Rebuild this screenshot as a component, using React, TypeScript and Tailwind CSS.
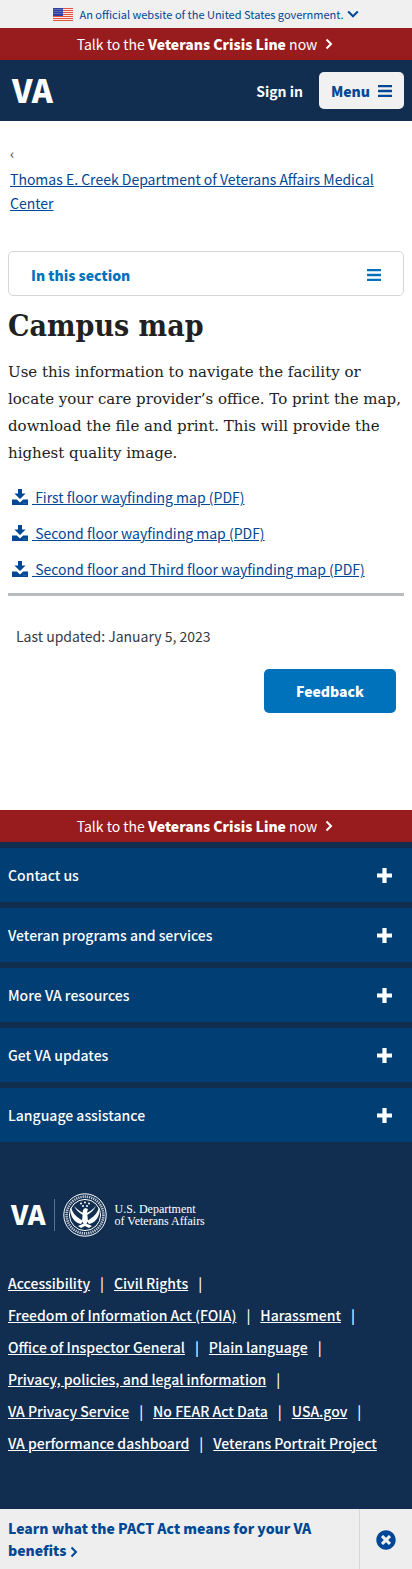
import React from "react";
import { FaTimesCircle } from "react-icons/fa";

const footerSections = [
  "Contact us",
  "Veteran programs and services",
  "More VA resources",
  "Get VA updates",
  "Language assistance",
];

const maps = [
  "First floor wayfinding map (PDF)",
  "Second floor wayfinding map (PDF)",
  "Second floor and Third floor wayfinding map (PDF)",
];

const footerLinks = [
  "Accessibility",
  "Civil Rights",
  "Freedom of Information Act (FOIA)",
  "Harassment",
  "Office of Inspector General",
  "Plain language",
  "Privacy, policies, and legal information",
  "VA Privacy Service",
  "No FEAR Act Data",
  "USA.gov",
  "VA performance dashboard",
  "Veterans Portrait Project",
];

const stripes = [0, 2, 4, 6, 8, 10, 12];
const starRows = [1, 3, 5];
const starColumns = [1, 3, 5, 7, 9];

function Flag() {
  return (
    <svg viewBox="0 0 20 13" className="h-[13px] w-5" aria-hidden="true">
      <rect width="20" height="13" fill="#fbe9e2" />
      {stripes.map((y) => (
        <rect key={y} y={y} width="20" height="1" fill="#e0533f" />
      ))}
      <rect width="10" height="8" fill="#2c3fa8" />
      {starRows.map((y) =>
        starColumns.map((x) => (
          <circle key={`${x}-${y}`} cx={x} cy={y + 0.5} r="0.4" fill="#fff" />
        )),
      )}
    </svg>
  );
}

function Bars() {
  return (
    <svg viewBox="0 0 14 12" className="h-3 w-[14px]" fill="currentColor" aria-hidden="true">
      <rect y="0" width="14" height="2.3" rx="0.3" />
      <rect y="4.85" width="14" height="2.3" rx="0.3" />
      <rect y="9.7" width="14" height="2.3" rx="0.3" />
    </svg>
  );
}

function Chevron({ className, d }: { className: string; d: string }) {
  return (
    <svg
      viewBox="0 0 12 12"
      className={className}
      fill="none"
      stroke="currentColor"
      strokeWidth="2"
      aria-hidden="true"
    >
      <path d={d} />
    </svg>
  );
}

const right = "M3.5 1.5L8 6l-4.5 4.5";
const down = "M1.2 3.5L6 8.3l4.8-4.8";

function Download() {
  return (
    <svg viewBox="0 0 16 16" className="mx-1 size-4" fill="currentColor" aria-hidden="true">
      <path d="M6 0h4v4.6h3.6L8 10 2.4 4.6H6z" />
      <path d="M0 10.6h4.8L8 13.4l3.2-2.8H16V16H0z" />
      <path d="M11.6 13.8h.8v.8h-.8zM13.6 13.8h.8v.8h-.8z" fill="#fff" opacity="0.7" />
    </svg>
  );
}

function Plus() {
  return (
    <svg viewBox="0 0 15 15" className="size-[15px]" fill="currentColor" aria-hidden="true">
      <path d="M5.4 0h4.2v5.4H15v4.2H9.6V15H5.4V9.6H0V5.4h5.4z" />
    </svg>
  );
}

function Seal() {
  return (
    <svg viewBox="0 0 44 44" className="size-11" fill="none" stroke="#fff" aria-hidden="true">
      <circle cx="22" cy="22" r="21.2" strokeWidth="1" />
      <circle cx="22" cy="22" r="18.4" strokeWidth="2.6" strokeDasharray="1.3 0.9" opacity="0.75" />
      <circle cx="22" cy="22" r="15.6" strokeWidth="1" />
      <g fill="#fff" stroke="none">
        <path d="M8 14c1 5 4 9 9 12l3 2-2 3c-5-1-9-5-10-10-.5-3-.6-5 0-7z" />
        <path d="M36 14c-1 5-4 9-9 12l-3 2 2 3c5-1 9-5 10-10 .5-3 .6-5 0-7z" />
        <path d="M11 13c2 4 5 7 9 9l1-2c-4-1-7-4-10-7z" />
        <path d="M33 13c-2 4-5 7-9 9l-1-2c4-1 7-4 10-7z" />
        <path d="M20 17l2-2 3 1-1 3 1 9-3 5-3-5z" />
        <path d="M15 33l7-3 7 3-3 2-4-2-4 2z" />
        <circle cx="22" cy="9.5" r="1" />
        <circle cx="18" cy="10.5" r="1" />
        <circle cx="26" cy="10.5" r="1" />
        <circle cx="20" cy="13" r="1" />
        <circle cx="24" cy="13" r="1" />
      </g>
    </svg>
  );
}

function CrisisLine() {
  return (
    <a
      href="#crisis-line"
      className="flex h-8 items-center justify-center bg-[#981b1e] text-white"
    >
      <span>
        Talk to the <strong className="font-black">Veterans Crisis Line</strong> now
      </span>
      <Chevron className="ml-[6px] size-3" d={right} />
    </a>
  );
}

export default function App() {
  return (
    <div className="bg-white font-['Noto_Sans_CJK_JP','Noto_Sans',sans-serif] text-[14px] leading-6 text-[#323a45]">
      <header>
        <button
          type="button"
          className="flex h-7 w-full items-center justify-center bg-[#f0f0f0] text-[11px] text-[#004795]"
        >
          <Flag />
          <span className="mr-[3px] ml-[6px]">
            An official website of the United States government.
          </span>
          <Chevron className="size-3" d={down} />
        </button>
        <CrisisLine />
        <div className="flex items-center bg-[#112e51] px-2 py-3">
          <a href="#home" className="ml-1 pb-1 text-[32px] leading-8 font-black text-white">
            VA
          </a>
          <button type="button" className="mr-4 ml-auto font-bold text-white">
            Sign in
          </button>
          <button
            type="button"
            className="flex h-[37px] items-center gap-2 rounded-[5px] bg-[#f1f1f1] px-3 font-black text-[#004795]"
          >
            Menu
            <Bars />
          </button>
        </div>
      </header>

      <main className="px-2">
        <nav aria-label="Breadcrumb" className="px-[2px] pt-5 pb-9">
          <div aria-hidden="true">‹</div>
          <a href="#medical-center" className="mt-[2px] block text-[#004795] underline">
            Thomas E. Creek Department of Veterans Affairs Medical Center
          </a>
        </nav>
        <button
          type="button"
          className="flex h-[45px] w-full items-center justify-between rounded-[5px] border border-[#d6d7d9] px-[22px] pt-[2px] font-black text-[#0071bb]"
        >
          In this section
          <Bars />
        </button>

        <h1 className="mt-2 font-['DejaVu_Serif_Condensed','DejaVu_Serif',serif] text-[30px] leading-[44px] font-bold text-[#212121]">
          Campus map
        </h1>
        <p className="mt-[11px] font-['DejaVu_Serif',serif] text-[15px] leading-[27px] text-[#212121]">
          Use this information to navigate the facility or locate your care provider’s office. To
          print the map, download the file and print. This will provide the highest quality image.
        </p>
        <ul className="mt-[18px] border-b-[3px] border-[#b8bbbf]">
          {maps.map((map) => (
            <li key={map} className="mb-3">
              <a href="#download" className="flex items-center text-[#004795] underline">
                <Download />
                <span className="whitespace-pre"> {map}</span>
              </a>
            </li>
          ))}
        </ul>
        <p className="mt-7 px-2">Last updated: January 5, 2023</p>
        <div className="flex justify-end px-2 pt-[21px] pb-[97px]">
          <button
            type="button"
            className="h-11 rounded-[5px] bg-[#0071bb] px-8 font-black text-white"
          >
            Feedback
          </button>
        </div>
      </main>

      <footer className="bg-[#112e51] text-white">
        <CrisisLine />
        <ul className="pt-[6px]">
          {footerSections.map((section) => (
            <li key={section} className="mb-[6px]">
              <button
                type="button"
                className="flex h-[54px] w-full items-center justify-between bg-[#003e73] pr-5 pl-2 font-medium"
              >
                {section}
                <Plus />
              </button>
            </li>
          ))}
        </ul>
        <a href="#home" className="mt-[51px] flex items-center px-[11px]">
          <span className="pb-[2px] text-[27px] leading-8 font-black">VA</span>
          <span className="mx-2 h-8 w-px bg-[#5b7391]" />
          <Seal />
          <span className="ml-2 font-['Liberation_Serif',serif] text-[12px] leading-3">
            U.S. Department
            <br />
            of Veterans Affairs
          </span>
        </a>
        <ul className="flex flex-wrap px-2 pt-[30px] pb-[50px] font-medium">
          {footerLinks.map((link, index) => (
            <li key={link} className="flex h-8 items-center">
              <a href="#footer-link" className="underline">
                {link}
              </a>
              {index < footerLinks.length - 1 && <span className="mx-[10px]">|</span>}
            </li>
          ))}
        </ul>
      </footer>

      <aside className="sticky bottom-0 flex bg-[#eee] font-black text-[#004795]">
        <a href="#pact-act" className="flex-1 px-2 pt-2 pb-[9px] leading-[22px]">
          Learn what the PACT Act means for your VA benefits
          <Chevron className="ml-[2px] inline size-3" d={right} />
        </a>
        <button
          type="button"
          aria-label="Close"
          className="flex w-[53px] items-center justify-center border-l border-[#d6d7d9]"
        >
          <FaTimesCircle className="size-5" aria-hidden="true" />
        </button>
      </aside>
    </div>
  );
}
